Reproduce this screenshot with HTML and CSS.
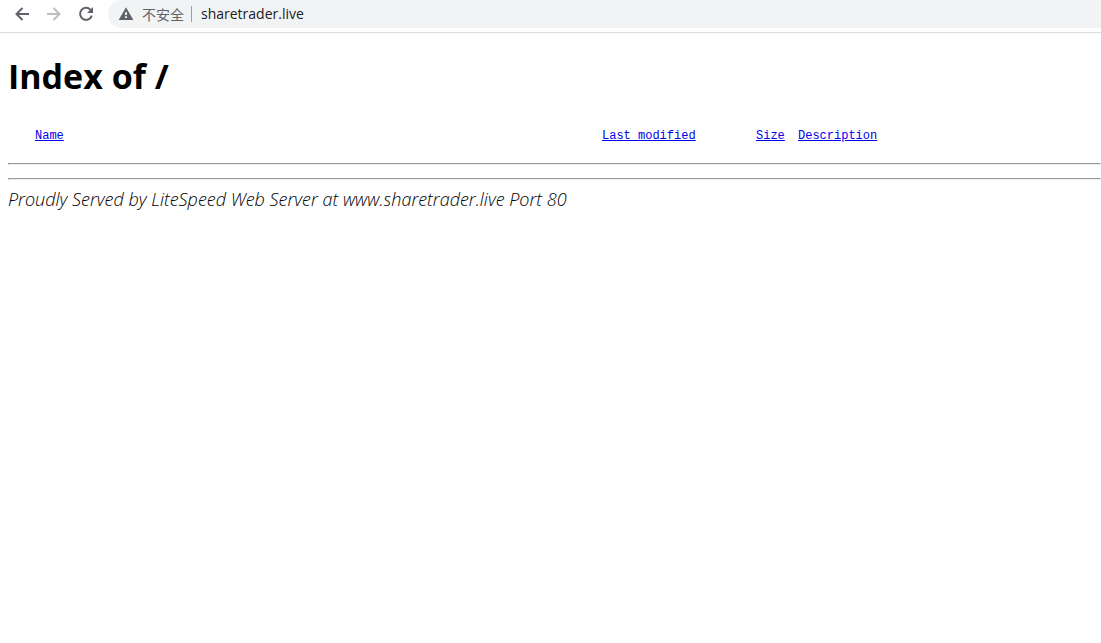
FILE: index.html
```html
<!DOCTYPE html>
<html lang="en">
<head>
    <meta charset="UTF-8">
    <meta name="viewport" content="width=device-width, initial-scale=1.0">
    <title>Index of /</title>
    <link rel="stylesheet" href="styles.css">
</head>
<body>
    <header class="toolbar">
        <button class="nav-button" type="button" aria-label="Back">
            <svg viewBox="0 0 20 20"><path d="M17 10H4.5M10.5 4l-6 6 6 6"/></svg>
        </button>
        <button class="nav-button" type="button" aria-label="Forward" disabled>
            <svg viewBox="0 0 20 20"><path d="M3 10h12.5M9.5 4l6 6-6 6"/></svg>
        </button>
        <button class="nav-button" type="button" aria-label="Reload">
            <svg viewBox="0 0 20 20"><path d="M14.6 5.8A6 6 0 1 0 15.8 11.6"/><path class="head" d="M17 3v6h-6z"/></svg>
        </button>
        <div class="address-bar">
            <button class="security" type="button">
                <svg viewBox="0 0 24 24"><path d="M1 21h22L12 2 1 21zm12.5-3h-3v-2.5h3V18zm0-4.5h-3v-4h3v4z"/></svg>
                <span lang="zh-CN">不安全</span>
            </button>
            <input class="url" type="text" aria-label="Address" value="sharetrader.live">
        </div>
    </header>

    <main class="listing">
        <h1>Index of /</h1>
        <table>
            <thead>
                <tr>
                    <th class="name"><a href="?ND">Name</a></th>
                    <th class="modified"><a href="?MA">Last modified</a></th>
                    <th class="size"><a href="?SA">Size</a></th>
                    <th><a href="?DA">Description</a></th>
                </tr>
            </thead>
        </table>
        <hr>
        <hr>
        <address>Proudly Served by LiteSpeed Web Server at www.sharetrader.live Port 80</address>
    </main>
</body>
</html>
```

FILE: styles.css
```css
* { box-sizing: border-box; }
body {
    margin: 0;
    background: #fff;
    color: #000;
    font-family: "Open Sans", "Noto Sans CJK SC", sans-serif;
}
button, input {
    padding: 0;
    border: none;
    background: none;
    font-family: inherit;
}
.toolbar {
    display: flex;
    align-items: flex-start;
    height: 33px;
    padding-left: 6px;
    border-bottom: 1px solid #dadce0;
}
.nav-button {
    display: flex;
    align-items: center;
    justify-content: center;
    width: 32px;
    height: 28px;
    color: #5f6368;
}
.nav-button svg {
    width: 20px;
    height: 20px;
    fill: none;
    stroke: currentColor;
    stroke-width: 2;
}
.nav-button .head { fill: currentColor; stroke: none; }
.nav-button:disabled { color: #bbbdbf; }
.address-bar {
    display: flex;
    flex: 1;
    align-items: center;
    height: 28px;
    margin-left: 6px;
    padding-left: 10px;
    background: #f1f3f4;
    border-radius: 14px 0 0 14px;
}
.security {
    display: flex;
    align-items: center;
    gap: 8px;
    height: 16px;
    padding-right: 7px;
    border-right: 1px solid #9aa0a6;
    color: #5f6368;
    font-family: "Noto Sans CJK SC", sans-serif;
    font-size: 14px;
    line-height: 14px;
}
.security svg { width: 16px; height: 16px; fill: #5f6368; }
.url {
    flex: 1;
    min-width: 0;
    padding-left: 9px;
    color: #202124;
    font-size: 14px;
    line-height: 20px;
}
.listing { padding: 20px 0 8px 8px; }
h1 {
    margin: 0;
    font-size: 34px;
    font-weight: 700;
    line-height: 46px;
}
table {
    margin: 29px 0 19px;
    border-collapse: collapse;
    font-family: "Liberation Mono", monospace;
    font-size: 12px;
    line-height: 16px;
}
th { padding: 0; font-weight: 400; text-align: left; }
.name { width: 594px; padding-left: 27px; }
.modified { width: 154px; }
.size { width: 42px; }
a { color: #0000ee; }
hr { margin: 0 0 13px; }
hr + hr { margin-bottom: 8px; }
address { font-size: 18px; font-weight: 300; line-height: 22px; }
```
